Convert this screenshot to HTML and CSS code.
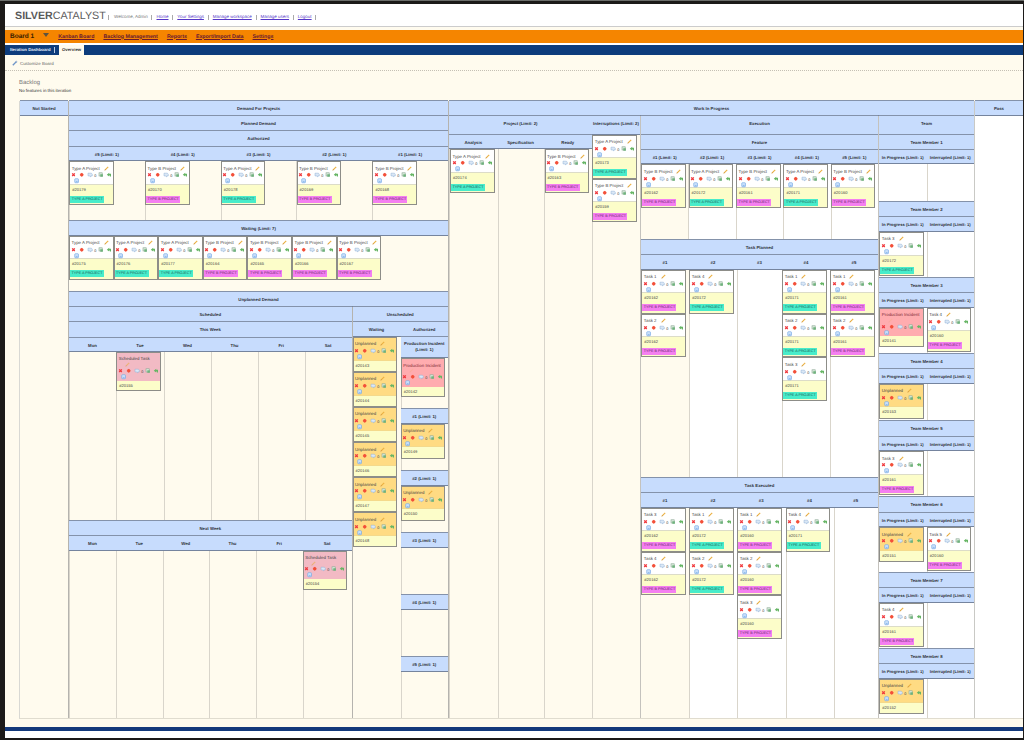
FILE: index.html
```html
<!DOCTYPE html>
<html lang="en">
<head>
<meta charset="utf-8">
<title>SilverCatalyst - Board 1</title>
<link rel="stylesheet" href="styles.css">
</head>
<body>
<div class="page">
  <header class="top">
    <div class="logo"><b>SILVER</b>CATALYST</div>
    <nav class="user"><span>Welcome, Admin</span><a>Home</a><a>Your Settings</a><a>Manage workspace</a><a>Manage users</a><a>Logout</a></nav>
  </header>
  <nav class="main"><strong>Board 1</strong><i class="caret"></i><a>Kanban Board</a><a>Backlog Management</a><a>Reports</a><a>Export/Import Data</a><a>Settings</a></nav>
  <nav class="tabs"><a class="tab">Iteration Dashboard</a><a class="tab on">Overview</a></nav>
  <div class="custom"><svg class="wrench" viewBox="0 0 6 6"><path d="M.8 5.2 4 2" stroke="#6f95c8" stroke-width="1.3"/><path d="M3.2 1.6 4.4.5l.2 1 1 .2-1.2 1.2z" fill="#89a7cc"/></svg>Customize Board</div>
  <section class="backlog"><h2>Backlog</h2><p>No features in this iteration</p></section>

  <main class="board">
    <section class="col c-start"><div class="hd">Not Started</div><div class="cell"></div></section>

    <section class="col c-demand">
      <div class="hd">Demand For Projects</div>
      <div class="hd">Planned Demand</div>
      <div class="hd">Authorized</div>
      <div class="row authorized">
        <div class="col"><div class="hd">#5 (Limit: 1)</div><div class="cell"><div class="card a" data-id="#20179">Type A Project</div></div></div>
        <div class="col"><div class="hd">#4 (Limit: 1)</div><div class="cell"><div class="card b" data-id="#20170">Type B Project</div></div></div>
        <div class="col"><div class="hd">#3 (Limit: 1)</div><div class="cell"><div class="card a" data-id="#20178">Type A Project</div></div></div>
        <div class="col"><div class="hd">#2 (Limit: 1)</div><div class="cell"><div class="card b" data-id="#20169">Type B Project</div></div></div>
        <div class="col"><div class="hd">#1 (Limit: 1)</div><div class="cell"><div class="card b" data-id="#20168">Type B Project</div></div></div>
      </div>
      <div class="hd">Waiting (Limit: 7)</div>
      <div class="cell waiting">
        <div class="card a" data-id="#20175">Type A Project</div><div class="card a" data-id="#20176">Type A Project</div><div class="card a" data-id="#20177">Type A Project</div><div class="card b" data-id="#20164">Type B Project</div><div class="card b" data-id="#20165">Type B Project</div><div class="card b" data-id="#20166">Type B Project</div><div class="card b" data-id="#20167">Type B Project</div>
      </div>
      <div class="hd">Unplanned Demand</div>
      <div class="row grow">
        <div class="col c-sched">
          <div class="hd">Scheduled</div>
          <div class="hd">This Week</div>
          <div class="row days this">
            <div class="col"><div class="hd">Mon</div><div class="cell"></div></div>
            <div class="col"><div class="hd">Tue</div><div class="cell"><div class="card sch" data-id="#20155">Scheduled Task</div></div></div>
            <div class="col"><div class="hd">Wed</div><div class="cell"></div></div>
            <div class="col"><div class="hd">Thu</div><div class="cell"></div></div>
            <div class="col"><div class="hd">Fri</div><div class="cell"></div></div>
            <div class="col"><div class="hd">Sat</div><div class="cell"></div></div>
          </div>
          <div class="hd">Next Week</div>
          <div class="row days next">
            <div class="col"><div class="hd">Mon</div><div class="cell"></div></div>
            <div class="col"><div class="hd">Tue</div><div class="cell"></div></div>
            <div class="col"><div class="hd">Wed</div><div class="cell"></div></div>
            <div class="col"><div class="hd">Thu</div><div class="cell"></div></div>
            <div class="col"><div class="hd">Fri</div><div class="cell"></div></div>
            <div class="col"><div class="hd">Sat</div><div class="cell"><div class="card sch" data-id="#20154">Scheduled Task</div></div></div>
          </div>
        </div>
        <div class="col c-unsched">
          <div class="hd">Unscheduled</div>
          <div class="row grow">
            <div class="col c-wait"><div class="hd">Waiting</div><div class="cell"><div class="card unp" data-id="#20143">Unplanned</div><div class="card unp" data-id="#20144">Unplanned</div><div class="card unp" data-id="#20145">Unplanned</div><div class="card unp" data-id="#20146">Unplanned</div><div class="card unp" data-id="#20147">Unplanned</div><div class="card unp" data-id="#20148">Unplanned</div></div></div>
            <div class="col c-auth">
              <div class="hd">Authorized</div>
              <div class="hd two">Production Incident<br>(Limit: 1)</div><div class="cell pi"><div class="card inc" data-id="#20142">Production Incident</div></div>
              <div class="hd">#1 (Limit: 1)</div><div class="cell slot"><div class="card unp" data-id="#20149">Unplanned</div></div>
              <div class="hd">#2 (Limit: 1)</div><div class="cell slot"><div class="card unp" data-id="#20150">Unplanned</div></div>
              <div class="hd">#3 (Limit: 1)</div><div class="cell slot"></div>
              <div class="hd">#4 (Limit: 1)</div><div class="cell slot"></div>
              <div class="hd">#5 (Limit: 1)</div><div class="cell"></div>
            </div>
          </div>
        </div>
      </div>
    </section>

    <section class="col c-wip">
      <div class="hd">Work In Progress</div>
      <div class="row grow">
        <div class="col c-project">
          <div class="hd tall">Project (Limit: 2)</div>
          <div class="row grow phases">
            <div class="col"><div class="hd">Analysis</div><div class="cell"><div class="card a" data-id="#20174">Type A Project</div></div></div>
            <div class="col"><div class="hd">Specification</div><div class="cell"></div></div>
            <div class="col"><div class="hd">Ready</div><div class="cell"><div class="card b" data-id="#20163">Type B Project</div></div></div>
          </div>
        </div>
        <div class="col c-int"><div class="hd tall">Interruptions (Limit: 2)</div><div class="cell"><div class="card a" data-id="#20173">Type A Project</div><div class="card b" data-id="#20159">Type B Project</div></div></div>
        <div class="col c-exec">
          <div class="hd tall">Execution</div>
          <div class="hd">Feature</div>
          <div class="row five feature">
            <div class="col"><div class="hd">#1 (Limit: 1)</div><div class="cell"><div class="card b" data-id="#20162">Type B Project</div></div></div>
            <div class="col"><div class="hd">#2 (Limit: 1)</div><div class="cell"><div class="card a" data-id="#20172">Type A Project</div></div></div>
            <div class="col"><div class="hd">#3 (Limit: 1)</div><div class="cell"><div class="card b" data-id="#20161">Type B Project</div></div></div>
            <div class="col"><div class="hd">#4 (Limit: 1)</div><div class="cell"><div class="card a" data-id="#20171">Type A Project</div></div></div>
            <div class="col"><div class="hd">#5 (Limit: 1)</div><div class="cell"><div class="card b" data-id="#20160">Type B Project</div></div></div>
          </div>
          <div class="hd">Task Planned</div>
          <div class="row five planned">
            <div class="col"><div class="hd">#1</div><div class="cell"><div class="card b" data-id="#20162">Task 1</div><div class="card b" data-id="#20162">Task 2</div></div></div>
            <div class="col"><div class="hd">#2</div><div class="cell"><div class="card a" data-id="#20172">Task 4</div></div></div>
            <div class="col"><div class="hd">#3</div><div class="cell"></div></div>
            <div class="col"><div class="hd">#4</div><div class="cell"><div class="card a" data-id="#20171">Task 1</div><div class="card a" data-id="#20171">Task 2</div><div class="card a" data-id="#20171">Task 3</div></div></div>
            <div class="col"><div class="hd">#5</div><div class="cell"><div class="card b" data-id="#20161">Task 1</div><div class="card b" data-id="#20161">Task 2</div></div></div>
          </div>
          <div class="hd">Task Executed</div>
          <div class="row five executed">
            <div class="col"><div class="hd">#1</div><div class="cell"><div class="card b" data-id="#20162">Task 3</div><div class="card b" data-id="#20162">Task 4</div></div></div>
            <div class="col"><div class="hd">#2</div><div class="cell"><div class="card a" data-id="#20172">Task 1</div><div class="card a" data-id="#20172">Task 2</div></div></div>
            <div class="col"><div class="hd">#3</div><div class="cell"><div class="card b" data-id="#20160">Task 1</div><div class="card b" data-id="#20160">Task 2</div><div class="card b" data-id="#20160">Task 3</div></div></div>
            <div class="col"><div class="hd">#4</div><div class="cell"><div class="card a" data-id="#20171">Task 4</div></div></div>
            <div class="col"><div class="hd">#5</div><div class="cell"></div></div>
          </div>
        </div>
        <div class="col c-team">
          <div class="hd tall">Team</div>
          <div class="member m1"><div class="hd">Team Member 1</div><div class="lane"></div><div class="lane"></div></div>
          <div class="member"><div class="hd">Team Member 2</div><div class="lane"><div class="card a" data-id="#20172">Task 3</div></div><div class="lane"></div></div>
          <div class="member"><div class="hd">Team Member 3</div><div class="lane"><div class="card inc" data-id="#20141">Production Incident</div></div><div class="lane"><div class="card b" data-id="#20160">Task 4</div></div></div>
          <div class="member m4"><div class="hd">Team Member 4</div><div class="lane"><div class="card unp" data-id="#20153">Unplanned</div></div><div class="lane"></div></div>
          <div class="member"><div class="hd">Team Member 5</div><div class="lane"><div class="card b" data-id="#20161">Task 3</div></div><div class="lane"></div></div>
          <div class="member"><div class="hd">Team Member 6</div><div class="lane"><div class="card unp" data-id="#20151">Unplanned</div></div><div class="lane"><div class="card b" data-id="#20160">Task 5</div></div></div>
          <div class="member"><div class="hd">Team Member 7</div><div class="lane"><div class="card b" data-id="#20161">Task 4</div></div><div class="lane"></div></div>
          <div class="member last"><div class="hd">Team Member 8</div><div class="lane"><div class="card unp" data-id="#20152">Unplanned</div></div><div class="lane"></div></div>
        </div>
      </div>
    </section>

    <section class="col c-pass"><div class="hd">Pass</div><div class="cell"></div></section>
  </main>
  <footer class="foot"></footer>
</div>
<script src="board.js"></script>
</body>
</html>
```
FILE: board.js
```js
var PENCIL = '<svg class="pencil" viewBox="0 0 5 5"><path d="M.5 4.6 1 3.3 3.8.5l.8.8L1.8 4.1z" fill="#ecb040"/><path d="M.5 4.6 1 3.3l.8.8z" fill="#b98a50"/></svg>';
// Delete, block, comments (with count), copy, move and note icons.
var TOOLS = '<svg class="tools" viewBox="0 0 42 12">' +
  '<path d="M2.2 1.4 4.8 4M4.8 1.4 2.2 4" stroke="#f0383d" stroke-width="1.3" fill="none"/>' +
  '<circle cx="11.7" cy="2.8" r="1.7" fill="#f4503a"/><path d="M9.8 2.8h3.8M11.7 .9v3.8" stroke="#f4503a" stroke-width=".6"/>' +
  '<path d="M18 1.2h3.4l.9 1v1.7h-1.6l.2 1-1.6-1H18z" fill="#dbe8f6" stroke="#8fb0d6" stroke-width=".5"/>' +
  '<text x="24.2" y="4.9" font-size="3.8" fill="#444">0</text>' +
  '<rect x="29" y=".8" width="3.2" height="3.2" fill="#d8eadb" stroke="#8aa592" stroke-width=".6"/><path d="M30.3 2.3h2.6v2.5h-2.6z" fill="#6fb27d"/>' +
  '<path d="M36.8 2.7 39.2.8v1h1.8v2.8h-1v-1h-.8v1z" fill="#66b564"/>' +
  '<rect x="4.8" y="6.8" width="3.6" height="3.9" rx=".5" fill="#d9ebff" stroke="#6fa3e4" stroke-width=".7"/><path d="M5.8 9.3h1.8" stroke="#6fa3e4" stroke-width=".8"/>' +
  '</svg>';

// Expand each card stub into title, tool icons, id and project tag.
document.querySelectorAll('.card').forEach(function (card) {
  var title = card.textContent;
  var tag = card.classList.contains('a') ? 'TYPE A PROJECT'
          : card.classList.contains('b') ? 'TYPE B PROJECT' : '';
  card.innerHTML =
    '<div class="head"><div class="title"><span>' + title + '</span>' + PENCIL + '</div>' + TOOLS + '</div>' +
    '<div class="id">' + card.dataset.id + '</div>' +
    (tag ? '<div class="tag">' + tag + '</div>' : '');
});
// Every team member has the same two lanes.
document.querySelectorAll('.member').forEach(function (m) {
  m.querySelectorAll('.lane').forEach(function (lane, i) {
    lane.insertAdjacentHTML('afterbegin',
      '<div class="hd">' + (i ? 'Interrupted (Limit: 1)' : 'In Progress (Limit: 1)') + '</div>');
  });
});
```
FILE: styles.css
```css
* { box-sizing: border-box; }
body { margin: 0; width: 1024px; height: 740px; overflow: hidden; background: #1c1a19;
  font: 4.4px/6px "Liberation Sans", Arial, sans-serif; color: #333; text-rendering: geometricPrecision; }
.page { margin: 4px 1px 0 5px; height: 734px; background: #fffbee; display: flex; flex-direction: column; }
body::before { content: ""; display: block; height: 1px; margin-bottom: -1px; background: #6c6e6b; }

.top { height: 23px; flex: none; background: #fff; border-bottom: 1px solid #ccc; display: flex; padding-left: 10px; }
.logo { font-size: 10.7px; line-height: 24px; width: 93px; color: #5a5a5a; white-space: nowrap; }
.user { display: flex; height: 8px; margin-top: 9px; font-size: 4.5px; line-height: 8px; color: #777; }
.user > * { display: flex; }
.user > *::after { content: ""; width: 1px; height: 5px; margin: 1.5px 4px 0 3.8px; background: #aaa; }
.user::before { content: ""; width: 1px; height: 5px; margin: 1.5px 5px 0 0; background: #aaa; }
.user a { color: #5436c8; text-decoration: underline; text-decoration-thickness: .5px; }

.main { height: 13px; flex: none; margin-top: 3px; background: #f58500; display: flex; align-items: center; padding-left: 5px; gap: 9px; font-weight: bold; font-size: 5.3px; }
.main strong { font-size: 6.5px; color: #3a1d00; }
.main a { color: #6a1a30; text-decoration: underline; text-decoration-thickness: .6px; }
.caret { border: 3px solid transparent; border-top: 4px solid #5c5340; border-bottom: 0; margin: -3px 0 0 0; }
.tabs { height: 10px; flex: none; margin-top: 2px; background: #0d3c7c; display: flex; font: bold 4.3px/9px "Liberation Sans", Arial, sans-serif; color: #e4ecf8; padding-left: 5px; box-shadow: 0 -2px 0 #fff; }
.tab:first-child { width: 45px; margin: 2px 4px 0 0; border-right: 1px solid #b9c9e2; height: 6px; line-height: 6px; }
.tab.on { background: #fffbee; color: #333; padding: 0 3px; width: 25px; }
.custom { height: 16px; flex: none; border-bottom: 1px dotted #c5c0b4; color: #666; line-height: 18px; padding-left: 7px; display: flex; }
.wrench { width: 6px; height: 6px; margin: 5px 2px 0 0; }
.backlog { height: 30px; flex: none; padding: 8px 0 0 14px; }
.backlog h2 { margin: 0; font: 5.9px/8px "Liberation Sans", Arial, sans-serif; color: #777; }
.backlog p { margin: 1px 0 0; }

.board { height: 618px; flex: none; margin-left: 14px; display: flex; border-bottom: 1px solid #e0dccf; border-left: 1px solid #d9d9d4; }
.col { display: flex; flex-direction: column; min-width: 0; }
.row { display: flex; flex: none; }
.grow { flex: 1 1 0; }
.hd { height: 15.2px; flex: none; position: relative; z-index: 1; background: #c7dcfd; border-bottom: 1px solid #75849e; box-shadow: 0 -1px 0 #8492aa; text-align: center; font-weight: bold; font-size: 4.3px; line-height: 15px; color: #30343c; white-space: nowrap; }
.hd.tall { height: 18.5px; }
.row .row > .col > .hd:first-child, .authorized .hd, .days .hd, .phases .hd { height: 14.6px; }
.cell { flex: 1 1 0; border-left: 1px solid #d9d5cb; min-height: 0; }
.c-start { width: 48px; } .c-start .cell { border: 0; }
.c-demand { width: 381px; border-left: 1px solid #b5b3ae; border-right: 1px solid #b5b3ae; }
.c-wip { width: 526px; border-right: 1px solid #c9c9c5; }
.c-pass { flex: 1; background: #fff; } .c-pass .cell { border: 0; }

.authorized { height: 74px; display: grid; grid-template-columns: repeat(5, 1fr); }
.waiting { flex: none; height: 56.2px; display: flex; border-left: 0; }
.c-sched { width: 283.5px; border-right: 1px solid #b5b3ae; }
.days { display: grid; }
.days.this { height: 183.4px; grid-template-columns: 47px 48px 47px 47px 46.5px 1fr; }
.days.next { flex: 1; grid-template-columns: 47px 46.5px 46.5px 47px 46.5px 1fr; }
.c-unsched { flex: 1; }
.c-wait { width: 48px; } .c-wait .cell { border: 0; }
.c-auth { flex: 1; }
.c-auth > .hd { height: 14.8px; }
.c-auth > .hd.two { height: 21.4px; line-height: 6.5px; padding-top: 4px; }
.pi { flex: none; height: 50.8px; }
.slot { flex: none; height: 47.2px; }

.c-project { width: 143px; }
.phases { display: grid; grid-template-columns: 48.5px 46px 1fr; }
.c-int { width: 48px; }
.c-exec { width: 239px; background: #fff; border-left: 1px solid #c4c2bd; border-right: 1px solid #c4c2bd; }
.five { display: grid; }
.five .col:first-child .cell { background: #fffbee; border-left: 0; }
.feature { height: 90px; grid-template-columns: repeat(5, 1fr); }
.planned { height: 222.8px; grid-template-columns: 48px 48px 45px 48px 1fr; }
.executed { flex: 1; grid-template-columns: 48px 48px 48.5px 48px 1fr; }
.c-team { flex: 1; background: #fff; }
.member { height: 75.9px; flex: none; display: grid; grid-template-columns: 47.5px 1fr; grid-template-rows: 15.2px 1fr; }
.member > .hd { grid-column: 1 / 3; }
.member.m1 { height: 67.5px; }
.member.m4 { height: 67.5px; }
.member.last { height: auto; flex: 1; }
.lane + .lane { background: linear-gradient(#d9d5cb, #d9d5cb) no-repeat 0 0 / 1px 100%; }
.lane .hd { height: 14.6px; font-size: 4.2px; }

.card { width: 44.6px; height: 43.9px; flex: none; background: #fcfdc9; border: 1px solid #8d8d88; line-height: 5px; }
.cell > .card { margin-left: -.8px; }
.lane > .card, .five .col:first-child .card { margin-left: .3px; }
.waiting > .card, .c-wait .cell > .card, .phases .cell > .card { margin-left: 0; }
.head { height: 22.6px; background: #fff; border-bottom: 1px solid #dcdcc8; padding: 3.4px 0 0 1.5px; }
.title { display: flex; gap: 4px; height: 6px; white-space: nowrap; color: #444; }
.pencil { width: 5px; height: 5px; flex: none; }
.tools { display: block; width: 42px; height: 12px; margin: .8px 0 0 -2px; overflow: visible; }
.id { height: 11px; line-height: 10.6px; padding-left: 2px; font-size: 4.1px; color: #444; }
.tag { width: 34px; height: 7px; line-height: 7px; padding-left: 1.5px; font-size: 3.7px; white-space: nowrap; background: #48ecca; color: #1d5a54; }
.b .tag { background: #f47ff0; color: #642564; }
.unp { height: 35.1px; } .unp .head { background: #ffdb83; border-color: #f4d98b; }
.sch, .inc { height: 39px; }
.sch .head, .inc .head { height: 27.5px; }
.sch .title, .inc .title { height: 10.5px; display: block; }
.sch .title span, .inc .title span { display: block; height: 5.5px; }
.sch .pencil, .inc .pencil { display: block; margin-left: 6px; opacity: .6; }
.inc .pencil { opacity: .15; }
.sch .head { background: #f2bac4; border-color: #f2bac4; }
.inc .head { background: #ffacaf; border-color: #ffacaf; }
.inc .title span { color: #7c2b35; }
.sch .id, .inc .id, .unp .id { height: 10px; line-height: 10px; }

.foot { margin-top: auto; height: 11px; flex: none; background: #fff; border-top: 4px solid #14397b; }
```
